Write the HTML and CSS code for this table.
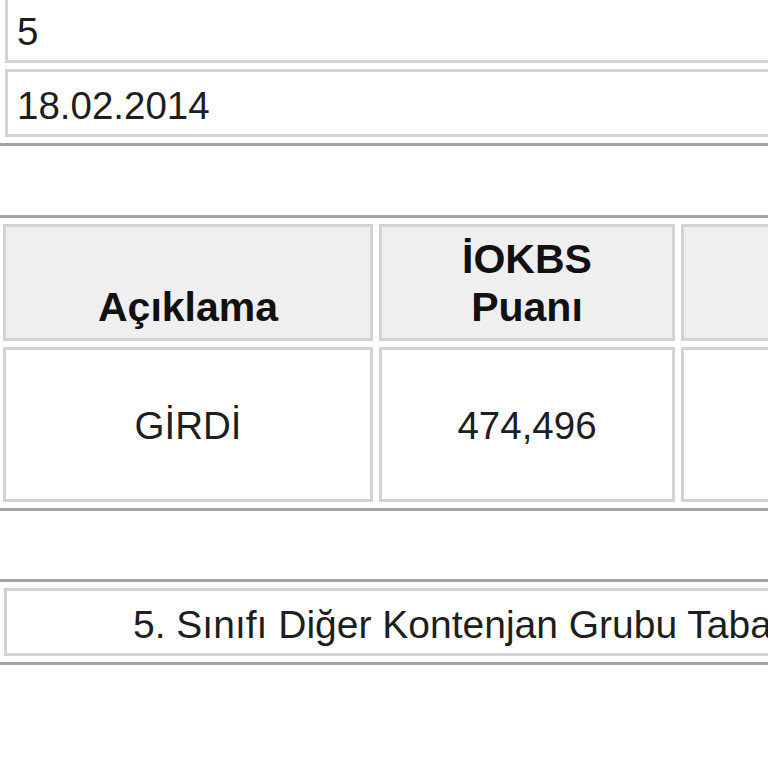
FILE: index.html
```html
<!DOCTYPE html>
<html lang="tr">
<head>
<meta charset="utf-8">
<title>Sonuç</title>
<link rel="stylesheet" href="styles.css">
</head>
<body>
<table class="grid info">
  <tr><td>5</td></tr>
  <tr><td>18.02.2014</td></tr>
</table>
<table class="grid scores">
  <tr>
    <th class="col-desc">Açıklama</th>
    <th class="col-score">İOKBS<br>Puanı</th>
    <th class="col-rest">&nbsp;</th>
  </tr>
  <tr>
    <td>GİRDİ</td>
    <td>474,496</td>
    <td>&nbsp;</td>
  </tr>
</table>
<table class="grid caption">
  <tr><td>5. Sınıfı Diğer Kontenjan Grubu Taban Puanı</td></tr>
</table>
</body>
</html>
```
FILE: styles.css
```css
html, body {
  margin: 0;
  padding: 0;
  overflow: hidden;
  background: #ffffff;
}
body {
  font-family: "Liberation Sans", Arial, sans-serif;
  color: #1e1e1e;
  width: 768px;
  height: 768px;
}
.grid {
  border: 3px solid #a3a3a3;
  border-collapse: separate;
  border-spacing: 6px;
  table-layout: fixed;
}
.grid td,
.grid th {
  border: 3px solid #d3d3d3;
  box-sizing: border-box;
}
.info {
  width: 1200px;
  margin: -14px 0 0 -4px;
}
.info td {
  font-size: 38.5px;
  line-height: 45px;
  padding: 11px 9px 6px;
  text-align: left;
}
.scores {
  width: 1100px;
  margin: 69px 0 0 -6px;
}
.scores th {
  background: #efefef;
  font-size: 41px;
  line-height: 48px;
  padding: 8px 9px 7px;
  vertical-align: bottom;
  font-weight: bold;
  color: #111111;
}
.scores td {
  font-size: 38.5px;
  line-height: 45px;
  padding: 53px 9px 51px;
  text-align: center;
  vertical-align: middle;
}
.col-desc { width: 370px; }
.col-score { width: 296px; }
.caption {
  width: 1200px;
  margin: 68px 0 0 -5px;
}
.caption td {
  font-size: 39px;
  line-height: 45px;
  padding: 11px 9px 6px 126px;
  white-space: nowrap;
  text-align: left;
}
```
